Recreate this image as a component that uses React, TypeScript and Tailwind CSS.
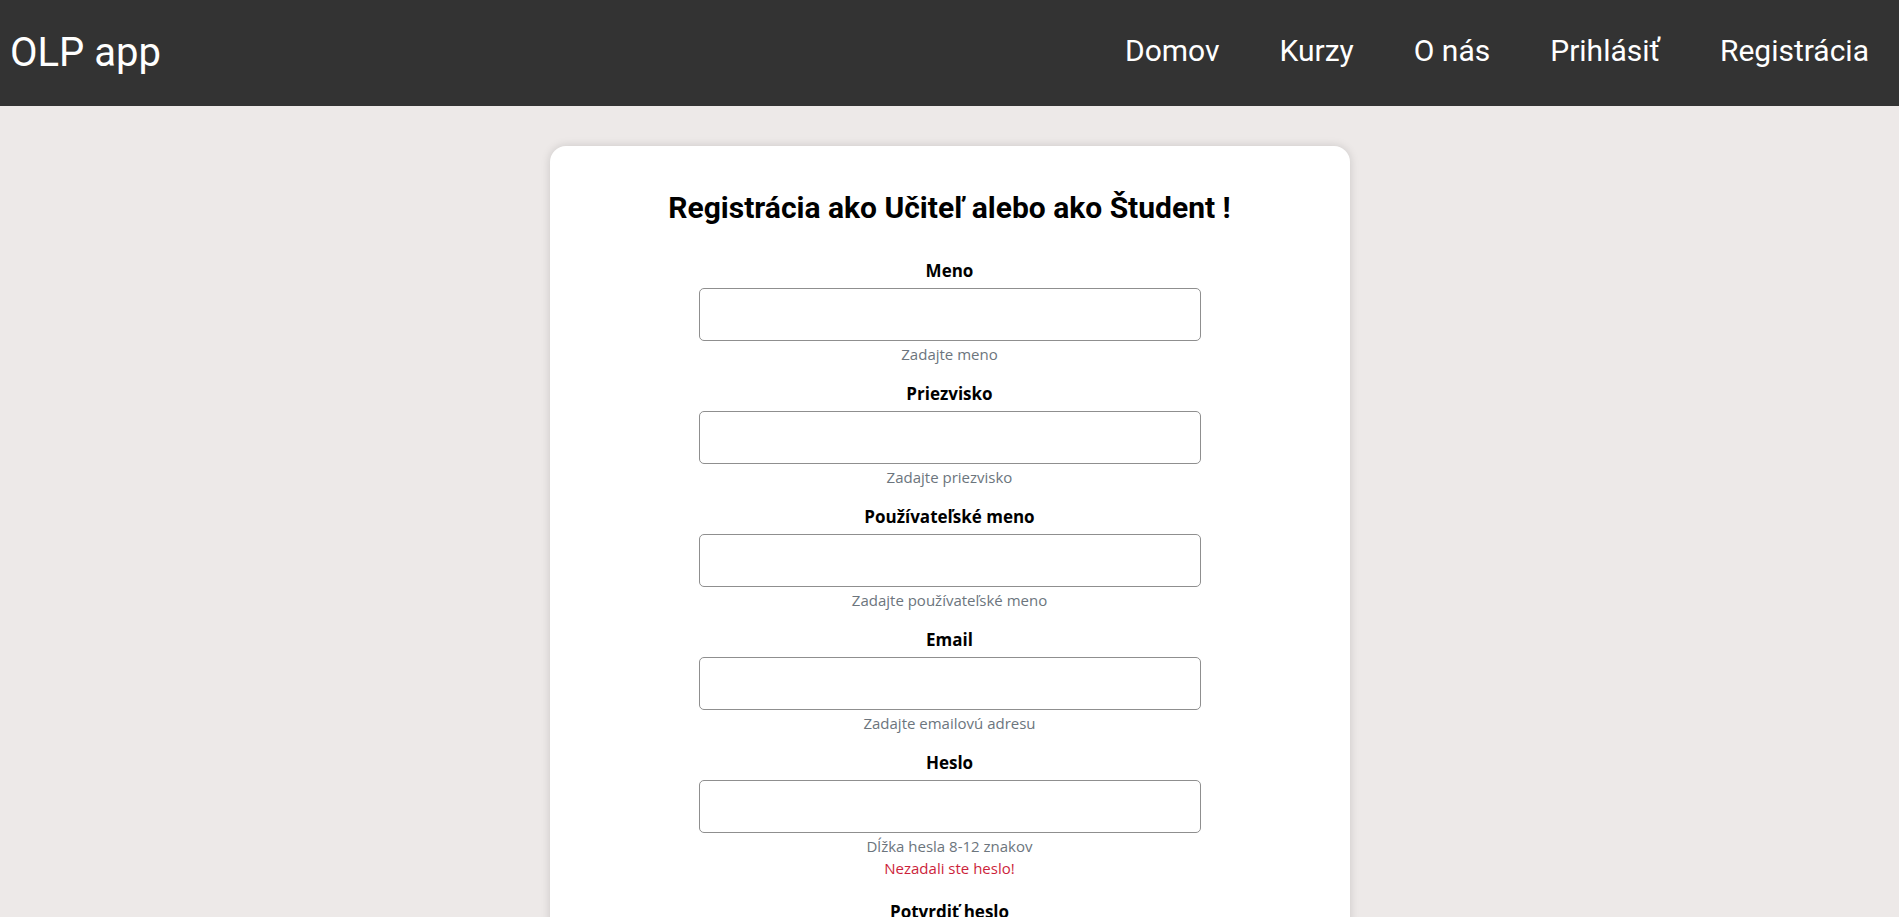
import React from "react";

type Field = {
  label: string;
  hint: string;
  type: string;
  error?: string;
};

const fields: Field[] = [
  { label: "Meno", hint: "Zadajte meno", type: "text" },
  { label: "Priezvisko", hint: "Zadajte priezvisko", type: "text" },
  { label: "Používateľské meno", hint: "Zadajte používateľské meno", type: "text" },
  { label: "Email", hint: "Zadajte emailovú adresu", type: "email" },
  { label: "Heslo", hint: "Dĺžka hesla 8-12 znakov", type: "password", error: "Nezadali ste heslo!" },
  { label: "Potvrdiť heslo", hint: "Zopakujte heslo", type: "password" },
];

const navLinks = ["Domov", "Kurzy", "O nás", "Prihlásiť", "Registrácia"];

export default function App() {
  return (
    <div className="min-h-screen bg-[#ede9e8] pb-10">
      <header className="flex h-[106px] items-center justify-between bg-[#333333] text-white">
        <div className="pl-[10px] font-['Roboto',sans-serif] text-[40px] leading-[1.172]">OLP app</div>
        <nav className="mb-[5px] flex items-center">
          {navLinks.map((l) => (
            <a
              key={l}
              href="#"
              className="px-[30px] font-['Roboto',sans-serif] text-[30px] leading-[1.172] text-white"
            >
              {l}
            </a>
          ))}
        </nav>
      </header>

      <main className="flex justify-center pt-[40px]">
        <div className="w-[800px] rounded-2xl bg-white pt-[45px] pb-10 shadow-[0_0_10px_rgba(0,0,0,0.15)]">
          <h2 className="mb-[33px] text-center font-['Roboto',sans-serif] text-[30px] font-bold leading-[34px] text-black">
            Registrácia ako Učiteľ alebo ako Študent !
          </h2>
          <form className="flex flex-col items-center font-['Open_Sans',sans-serif]">
            {fields.map((f) => (
              <div key={f.label} className={f.error ? "mb-5 flex flex-col items-center" : "mb-4 flex flex-col items-center"}>
                <label className="mb-[5px] mt-[1px] text-[17px] font-bold leading-6 text-black">{f.label}</label>
                <input
                  type={f.type}
                  className="h-[53px] w-[502px] rounded-[5px] border border-[#8f8f8f] bg-white px-3 outline-none"
                />
                <div className="mt-[2px] text-[15px] leading-[22px] text-[#6c757d]">{f.hint}</div>
                {f.error && <div className="text-[15px] leading-[22px] text-[#cc1f3b]">{f.error}</div>}
              </div>
            ))}
            <div className="mb-4 flex flex-col items-center">
              <span className="mb-[6px] text-[17px] font-bold leading-6 text-black">Registrovať sa ako</span>
              <div className="flex gap-6 text-[15px]">
                <label className="flex items-center gap-2">
                  <input type="radio" name="role" /> Učiteľ
                </label>
                <label className="flex items-center gap-2">
                  <input type="radio" name="role" /> Študent
                </label>
              </div>
            </div>
            <button type="button" className="mt-2 rounded-[5px] bg-[#333333] px-6 py-2 text-[16px] text-white">
              Registrovať
            </button>
          </form>
        </div>
      </main>
    </div>
  );
}
